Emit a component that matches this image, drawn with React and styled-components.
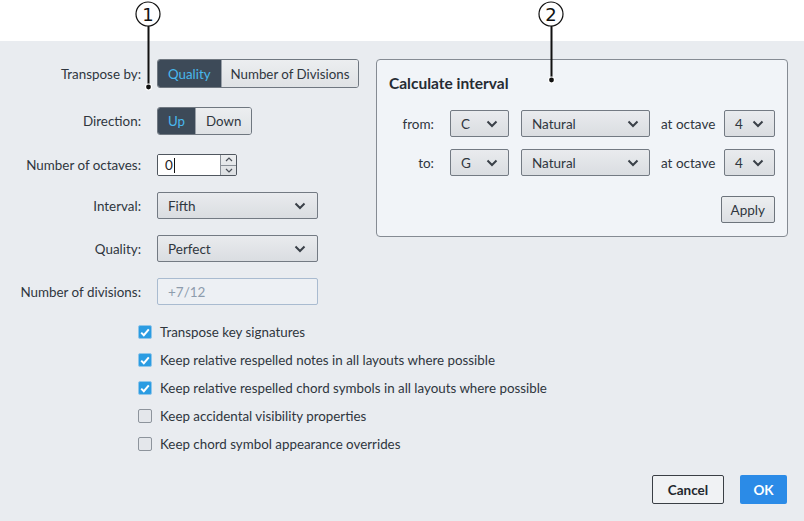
import styled, { createGlobalStyle } from 'styled-components';

const GlobalStyle = createGlobalStyle`
  html, body {
    margin: 0;
    padding: 0;
    background: #ffffff;
  }
  body {
    font-family: Lato, "Liberation Sans", sans-serif;
    color: #2f363e;
  }
`;

const Page = styled.div`
  position: relative;
  width: 804px;
  height: 521px;
  display: flex;
  flex-direction: column;
  overflow: hidden;
`;

const TopStrip = styled.div`
  height: 41px;
  background: #ffffff;
`;

const Dialog = styled.div`
  flex: 1;
  background: #e9ecf0;
  display: flex;
  flex-direction: column;
  padding: 18px 17px 17px 0;
`;

const Body = styled.div`
  display: grid;
  grid-template-columns: 376px 1fr;
  align-items: start;
`;

const Form = styled.div`
  display: flex;
  flex-direction: column;
  gap: 16px;
`;

const Row = styled.div`
  display: flex;
  align-items: center;
  margin-bottom: ${(p) => p.$extra || 0}px;
`;

const Label = styled.label`
  width: 141px;
  flex: none;
  display: flex;
  justify-content: flex-end;
  font-size: 13.4px;
  color: #2f363e;
  margin-right: 16px;
  white-space: nowrap;
`;

const Segmented = styled.div`
  display: flex;
  height: ${(p) => p.$h}px;
  border: 1px solid #6f7780;
  border-radius: 3px;
  box-sizing: border-box;
  overflow: hidden;
`;

const Segment = styled.div`
  display: flex;
  align-items: center;
  padding: 0 ${(p) => p.$pad}px;
  font-size: 13.3px;
  background: ${(p) => (p.$active ? '#3d4a58' : 'linear-gradient(#eceef0, #dfe2e5)')};
  color: ${(p) => (p.$active ? '#48b8ee' : '#2f363e')};
  & + & {
    border-left: 1px solid #9aa1a9;
  }
`;

const Spin = styled.div`
  display: flex;
  height: 22px;
  border: 1px solid #50575f;
  box-sizing: border-box;
  border-radius: 2px;
  overflow: hidden;
`;

const SpinField = styled.div`
  width: 62px;
  background: #ffffff;
  font-size: 13.5px;
  display: flex;
  align-items: center;
  padding-left: 7px;
  box-sizing: border-box;
  color: #222;
`;

const Caret = styled.span`
  display: inline-block;
  width: 1px;
  height: 15px;
  background: #111;
  margin-left: 1px;
`;

const SpinButtons = styled.div`
  width: 15px;
  display: flex;
  flex-direction: column;
  border-left: 1px solid #8a9098;
  background: linear-gradient(#eceef0, #dcdfe2);
`;

const SpinButton = styled.div`
  flex: 1;
  display: flex;
  align-items: center;
  justify-content: center;
  & + & {
    border-top: 1px solid #8a9098;
  }
`;

const Select = styled.div`
  width: ${(p) => p.$w}px;
  height: 27px;
  box-sizing: border-box;
  border: 1px solid #737a83;
  border-radius: 2px;
  background: linear-gradient(#e9ebee, #dadde1);
  display: flex;
  align-items: center;
  justify-content: space-between;
  padding: 0 ${(p) => p.$padR || 10}px 0 10px;
  font-size: 13.5px;
  color: #2f363e;
`;

const DisabledInput = styled.div`
  width: 161px;
  height: 27px;
  box-sizing: border-box;
  border: 1px solid #a9bbd0;
  border-radius: 2px;
  background: #edf0f4;
  display: flex;
  align-items: center;
  padding-left: 10px;
  font-size: 13.5px;
  color: #8d9cad;
`;

const Checks = styled.div`
  display: flex;
  flex-direction: column;
  gap: 8px;
  margin-top: 17px;
  padding-left: 138px;
`;

const CheckRow = styled.div`
  display: flex;
  align-items: center;
  height: 20px;
  font-size: 13.35px;
  color: #2f363e;
  white-space: nowrap;
`;

const Box = styled.span`
  width: 14px;
  height: 14px;
  flex: none;
  box-sizing: border-box;
  border-radius: 2px;
  margin-right: 8px;
  display: flex;
  align-items: center;
  justify-content: center;
  background: ${(p) => (p.$checked ? '#2b9ce2' : '#e4e7eb')};
  border: 1px solid ${(p) => (p.$checked ? '#8fc6ea' : '#8d949c')};
`;

const Panel = styled.div`
  border: 1px solid #858b93;
  border-radius: 4px;
  background: #f1f4f8;
  padding: 13px 12px 13px 12px;
  display: flex;
  flex-direction: column;
`;

const PanelTitle = styled.div`
  font-size: 15.5px;
  font-weight: 700;
  color: #262c33;
  height: 20px;
  line-height: 20px;
  margin-bottom: 17px;
`;

const PanelRows = styled.div`
  display: flex;
  flex-direction: column;
  gap: 12px;
`;

const PanelRow = styled.div`
  display: flex;
  align-items: center;
  justify-content: ${(p) => (p.$end ? 'flex-end' : 'flex-start')};
  margin-top: ${(p) => p.$top || 0}px;
`;

const PanelLabel = styled.span`
  width: ${(p) => p.$w}px;
  text-align: right;
  font-size: 13.5px;
  color: #2f363e;
  margin-right: ${(p) => p.$mr}px;
  margin-left: ${(p) => p.$ml || 0}px;
  white-space: nowrap;
`;

const Gap = styled.span`
  width: ${(p) => p.$w}px;
`;

const Button = styled.button`
  height: ${(p) => p.$h || 29}px;
  padding: 0 ${(p) => p.$pad || 0}px;
  box-sizing: border-box;
  font-family: Lato, "Liberation Sans", sans-serif;
  font-size: 13.5px;
  border-radius: 2px;
  cursor: pointer;
`;

const PlainButton = styled(Button)`
  border: 1px solid #6d747c;
  background: linear-gradient(#eceef0, #dcdfe3);
  color: #2f363e;
`;

const Footer = styled.div`
  margin-top: auto;
  display: flex;
  justify-content: flex-end;
  gap: 16px;
`;

const CancelButton = styled(Button)`
  border: 1px solid #3a3f45;
  background: #f0f2f4;
  color: #22272d;
  font-weight: 700;
  width: 72px;
`;

const OkButton = styled(Button)`
  border: none;
  background: #2b8be7;
  color: #ffffff;
  font-weight: 700;
  width: 47px;
`;

const Callout = styled.svg`
  position: absolute;
  top: 0;
  left: ${(p) => p.$x}px;
  overflow: visible;
`;

const Chevron = () => (
  <svg width="12" height="8" viewBox="0 0 12 8">
    <path d="M1.5 1.5 L6 6 L10.5 1.5" fill="none" stroke="#3a4048" strokeWidth="2" />
  </svg>
);

const Arrow = ({ up }) => (
  <svg width="8" height="5" viewBox="0 0 8 5">
    <path
      d={up ? 'M1 4 L4 1 L7 4' : 'M1 1 L4 4 L7 1'}
      fill="none"
      stroke="#4a5058"
      strokeWidth="1.2"
    />
  </svg>
);

const Tick = () => (
  <svg width="10" height="9" viewBox="0 0 10 9">
    <path d="M1.2 4.6 L3.8 7.2 L8.8 1.4" fill="none" stroke="#ffffff" strokeWidth="2" />
  </svg>
);

const CalloutMark = ({ x, n, len }) => (
  <Callout $x={x - 14} width="28" height={len + 6} viewBox={`0 0 28 ${len + 6}`}>
    <circle cx="14" cy="14" r="12" fill="#ffffff" stroke="#111" strokeWidth="1.2" />
    <text
      x="14"
      y="20.5"
      textAnchor="middle"
      fontSize="18"
      fontFamily="'DejaVu Sans', sans-serif"
      fill="#111"
    >
      {n}
    </text>
    <line x1="14.5" y1="26" x2="14.5" y2={len} stroke="#111" strokeWidth="2" />
    <circle cx="14.5" cy={len} r="3.5" fill="#ffffff" />
    <circle cx="14.5" cy={len} r="2.4" fill="#111" />
  </Callout>
);

const checks = [
  { text: 'Transpose key signatures', checked: true },
  { text: 'Keep relative respelled notes in all layouts where possible', checked: true },
  { text: 'Keep relative respelled chord symbols in all layouts where possible', checked: true },
  { text: 'Keep accidental visibility properties', checked: false },
  { text: 'Keep chord symbol appearance overrides', checked: false },
];

const NoteRow = ({ label, note }) => (
  <PanelRow>
    <PanelLabel $w={45} $mr={16}>{label}</PanelLabel>
    <Select $w={59} $padR={10}>
      {note}
      <Chevron />
    </Select>
    <Gap $w={12} />
    <Select $w={129}>
      Natural
      <Chevron />
    </Select>
    <PanelLabel $w={53} $ml={11} $mr={10}>at octave</PanelLabel>
    <Select $w={51} $padR={10}>
      4
      <Chevron />
    </Select>
  </PanelRow>
);

const App = () => (
  <Page>
    <GlobalStyle />
    <TopStrip />
    <Dialog>
      <Body>
        <Form>
          <Row $extra={3}>
            <Label>Transpose by:</Label>
            <Segmented $h={29}>
              <Segment $active $pad={10}>Quality</Segment>
              <Segment $pad={9}>Number of Divisions</Segment>
            </Segmented>
          </Row>
          <Row $extra={3}>
            <Label>Direction:</Label>
            <Segmented $h={28}>
              <Segment $active $pad={10}>Up</Segment>
              <Segment $pad={10}>Down</Segment>
            </Segmented>
          </Row>
          <Row>
            <Label>Number of octaves:</Label>
            <Spin>
              <SpinField>
                0<Caret />
              </SpinField>
              <SpinButtons>
                <SpinButton>
                  <Arrow up />
                </SpinButton>
                <SpinButton>
                  <Arrow />
                </SpinButton>
              </SpinButtons>
            </Spin>
          </Row>
          <Row>
            <Label>Interval:</Label>
            <Select $w={161} $padR={11}>
              Fifth
              <Chevron />
            </Select>
          </Row>
          <Row>
            <Label>Quality:</Label>
            <Select $w={161} $padR={11}>
              Perfect
              <Chevron />
            </Select>
          </Row>
          <Row>
            <Label>Number of divisions:</Label>
            <DisabledInput>+7/12</DisabledInput>
          </Row>
        </Form>
        <Panel>
          <PanelTitle>Calculate interval</PanelTitle>
          <PanelRows>
            <NoteRow label="from:" note="C" />
            <NoteRow label="to:" note="G" />
          </PanelRows>
          <PanelRow $end $top={20}>
            <PlainButton $h={27} $pad={9}>Apply</PlainButton>
          </PanelRow>
        </Panel>
      </Body>
      <Checks>
        {checks.map((c) => (
          <CheckRow key={c.text}>
            <Box $checked={c.checked}>{c.checked && <Tick />}</Box>
            {c.text}
          </CheckRow>
        ))}
      </Checks>
      <Footer>
        <CancelButton>Cancel</CancelButton>
        <OkButton>OK</OkButton>
      </Footer>
    </Dialog>
    <CalloutMark x={148} n="1" len={87} />
    <CalloutMark x={551} n="2" len={80} />
  </Page>
);

export default App;
